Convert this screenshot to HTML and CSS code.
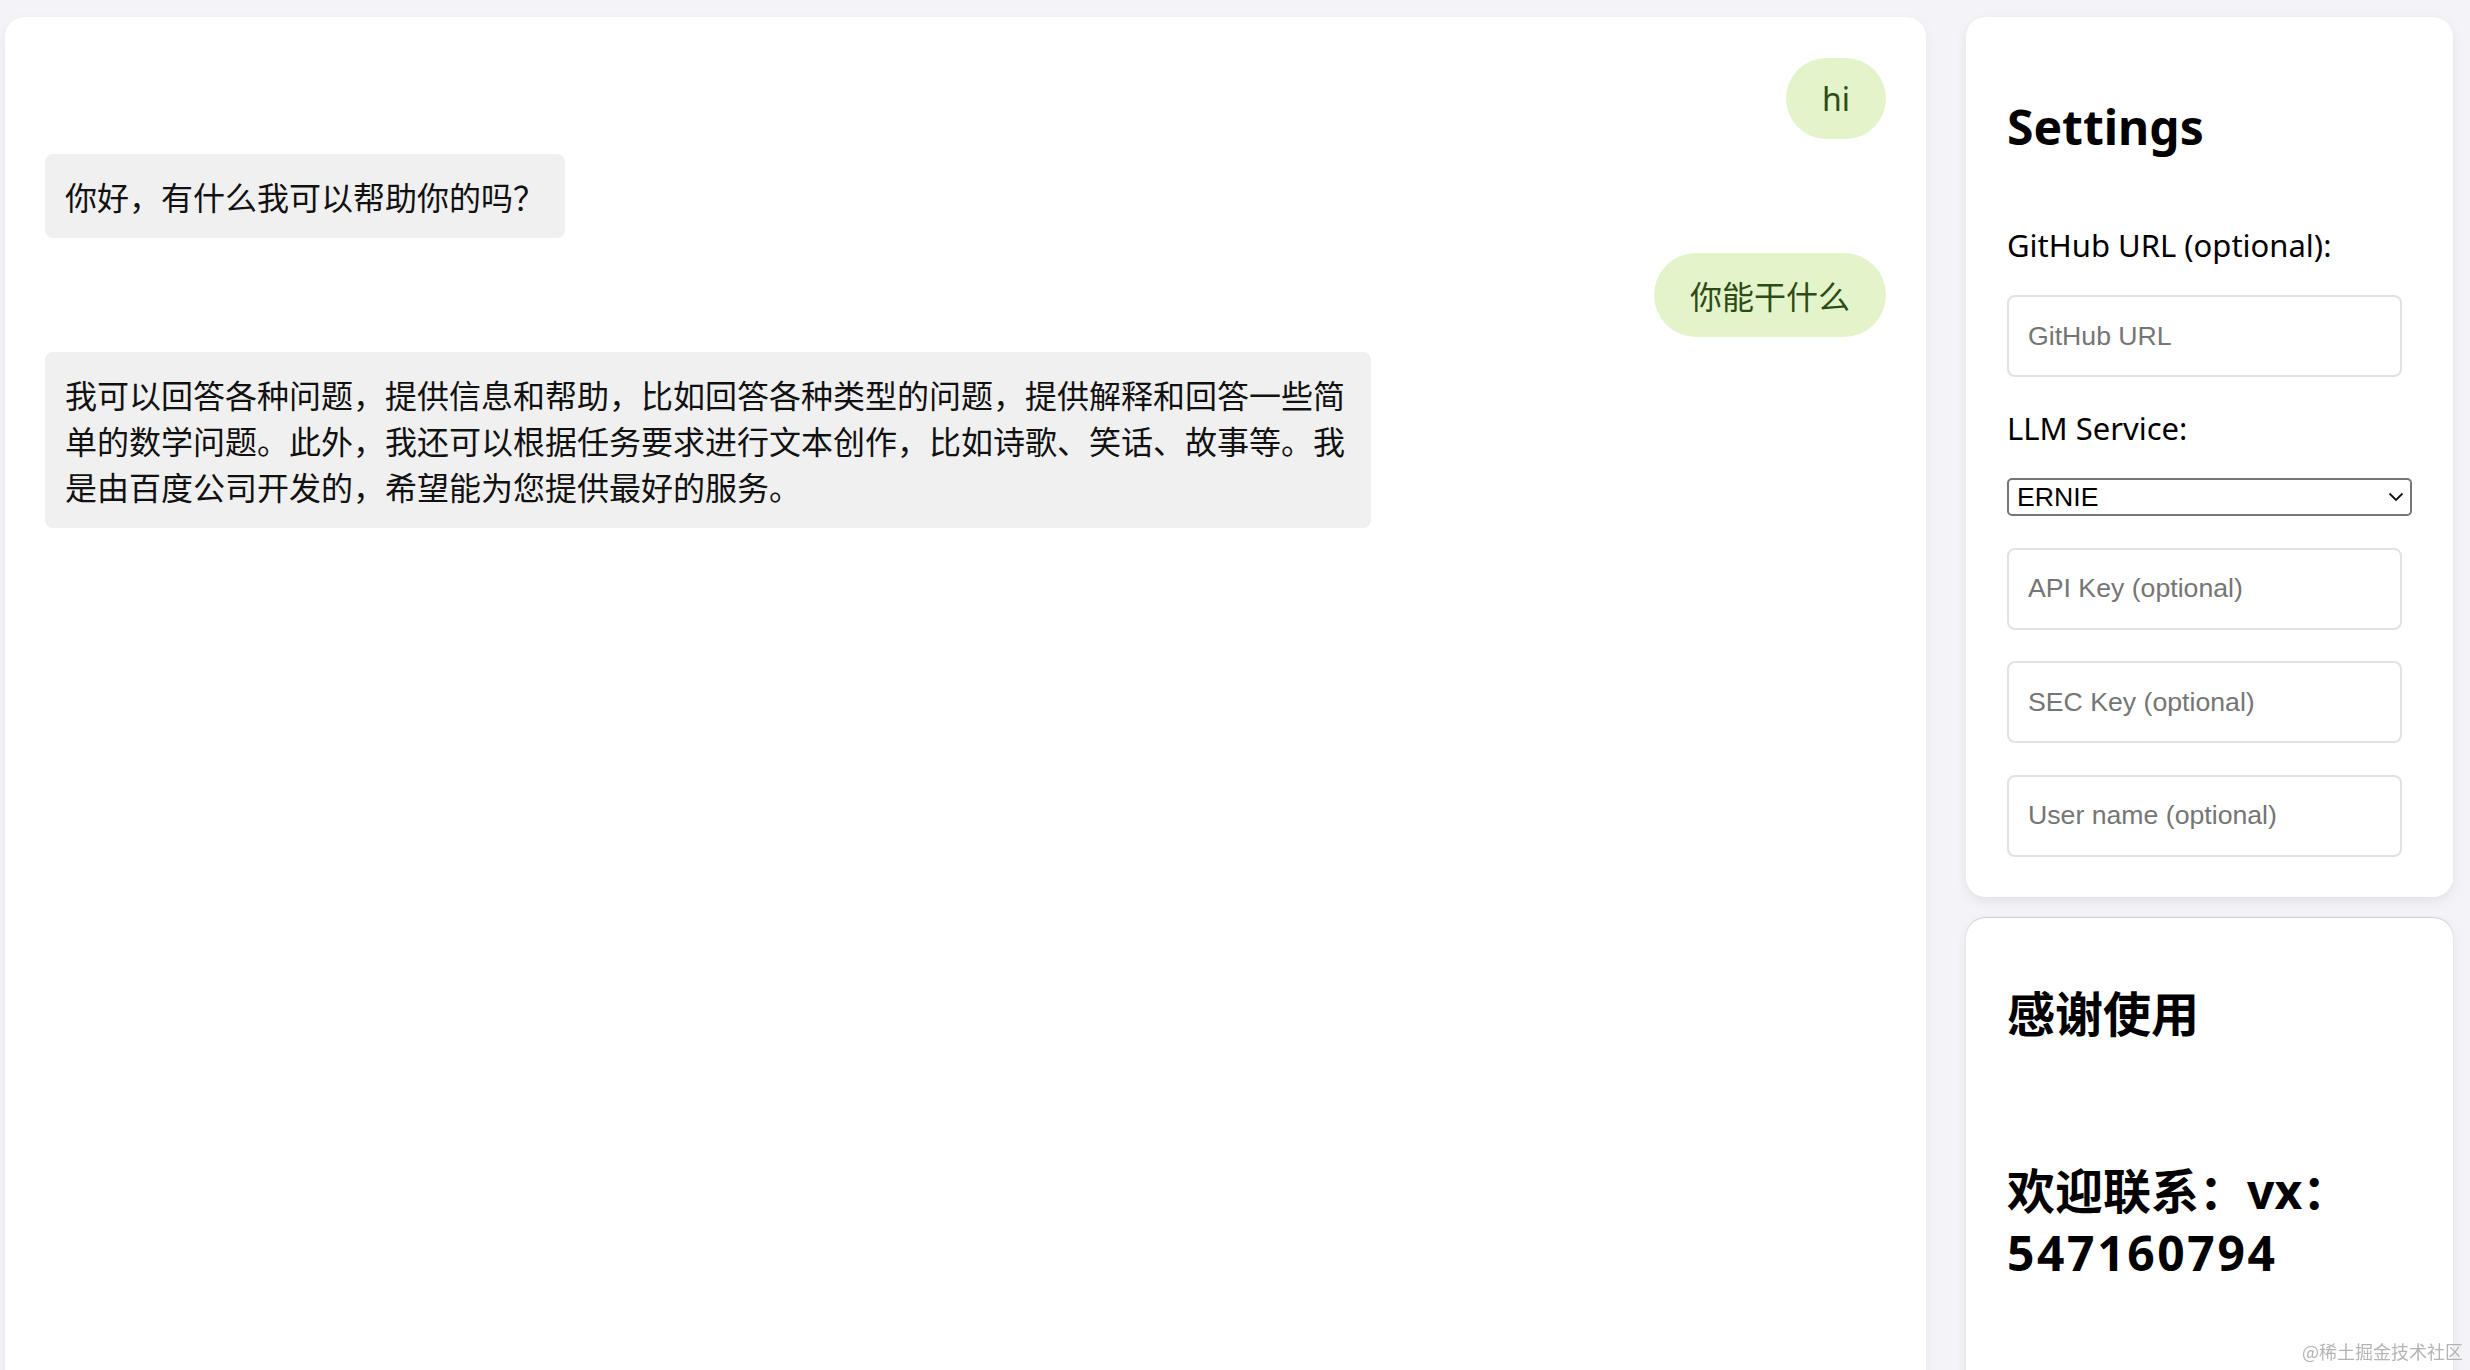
FILE: index.html
```html
<!DOCTYPE html>
<html lang="zh-CN">

<head>
    <meta charset="UTF-8">
    <meta name="viewport" content="width=device-width, initial-scale=1.0">
    <title>LLM Chat</title>
    <link rel="stylesheet" href="styles.css">
</head>

<body>
    <div class="app">
        <!-- Chat history -->
        <div class="chat">
            <div class="message user">hi</div>
            <div class="message bot">你好，有什么我可以帮助你的吗？</div>
            <div class="message user">你能干什么</div>
            <div class="message bot">我可以回答各种问题，提供信息和帮助，比如回答各种类型的问题，提供解释和回答一些简单的数学问题。此外，我还可以根据任务要求进行文本创作，比如诗歌、笑话、故事等。我是由百度公司开发的，希望能为您提供最好的服务。</div>
        </div>

        <div class="sidebar">
            <!-- Settings -->
            <div class="card settings">
                <h2>Settings</h2>
                <label for="github">GitHub URL (optional):</label>
                <input type="text" id="github" placeholder="GitHub URL">
                <label for="service">LLM Service:</label>
                <div class="select-wrap">
                    <select id="service">
                        <option>ERNIE</option>
                    </select>
                    <svg class="chevron" viewBox="0 0 16 10">
                        <polyline points="1.5,1.5 8,8 14.5,1.5" fill="none" stroke="#111" stroke-width="1.8" />
                    </svg>
                </div>
                <input type="text" id="apiKey" placeholder="API Key (optional)">
                <input type="text" id="secKey" placeholder="SEC Key (optional)">
                <input type="text" id="userName" placeholder="User name (optional)">
            </div>

            <div class="card thanks">
                <h2 class="title">感谢使用</h2>
                <h2 class="contact">欢迎联系：vx： <span class="number">547160794</span></h2>
            </div>
        </div>
    </div>

    <div class="watermark">@稀土掘金技术社区</div>
</body>

</html>
```

FILE: styles.css
```css
html,
body {
    height: 100%;
}

body {
    margin: 0;
    overflow: hidden;
    background-color: #f4f4f8;
    font-family: "Noto Sans", "Noto Sans CJK SC", sans-serif;
    color: #000;
}

.app {
    display: flex;
    align-items: flex-start;
    gap: 40px;
    padding: 17px 17px 0 5px;
}

/* chat */

.chat {
    flex: 1;
    height: 1400px;
    display: flex;
    flex-direction: column;
    gap: 15px;
    padding: 41px 40px;
    box-sizing: border-box;
    background-color: #fff;
    border-radius: 20px;
    box-shadow: 0 4px 12px rgba(0, 0, 0, 0.06);
}

.message {
    max-width: 72%;
    padding: 19px 20px;
    box-sizing: border-box;
    font-size: 32px;
    line-height: normal;
}

.message.user {
    align-self: flex-end;
    padding: 19px 36px;
    border-radius: 42px;
    background-color: #e4f4ca;
    color: #2d4b14;
}

.message.bot {
    align-self: flex-start;
    border-radius: 8px;
    background-color: #f0f0f0;
    color: #111;
}

/* sidebar */

.sidebar {
    width: 487px;
    flex-shrink: 0;
    display: flex;
    flex-direction: column;
    gap: 21px;
}

.card {
    padding: 40px 41px;
    background-color: #fff;
    border-radius: 20px;
    box-shadow: 0 4px 12px rgba(0, 0, 0, 0.08);
}

.settings {
    display: flex;
    flex-direction: column;
    gap: 31.5px;
}

.settings h2 {
    margin: 41px 0 38px;
    font-size: 48px;
    line-height: 58px;
    font-weight: 700;
}

.settings label {
    font-size: 31px;
    line-height: 38px;
}

.settings input {
    width: calc(100% - 10px);
    height: 82px;
    box-sizing: border-box;
    padding: 0 19px;
    border: 2px solid #e1e1e6;
    border-radius: 8px;
    font-family: "Liberation Sans", sans-serif;
    font-size: 26.67px;
    color: #000;
    outline: none;
}

.settings input::placeholder {
    color: #757575;
}

.select-wrap {
    position: relative;
}

.select-wrap select {
    width: 100%;
    height: 38px;
    padding: 0 8px;
    appearance: none;
    border: 2px solid #767676;
    border-radius: 5px;
    background-color: #fff;
    font-family: "Liberation Sans", sans-serif;
    font-size: 26.67px;
    color: #000;
}

.chevron {
    position: absolute;
    top: 14px;
    right: 8px;
    width: 16px;
    height: 10px;
    pointer-events: none;
}

.thanks {
    height: 600px;
    box-shadow: 0 4px 12px rgba(0, 0, 0, 0.08), 0 -1px 1px rgba(0, 0, 0, 0.14);
}

.thanks h2 {
    margin: 0;
    font-size: 48px;
    font-weight: 700;
}

.thanks .title {
    margin-top: 27px;
    line-height: 58px;
}

.thanks .contact {
    margin-top: 117px;
    line-height: 62px;
}

.thanks .number {
    letter-spacing: 2.6px;
}

.watermark {
    position: fixed;
    right: 7px;
    bottom: 6px;
    font-family: "Noto Sans CJK SC", sans-serif;
    font-size: 18px;
    color: #b4b4b4;
    text-shadow: 0 0 2px #fff;
}
```
